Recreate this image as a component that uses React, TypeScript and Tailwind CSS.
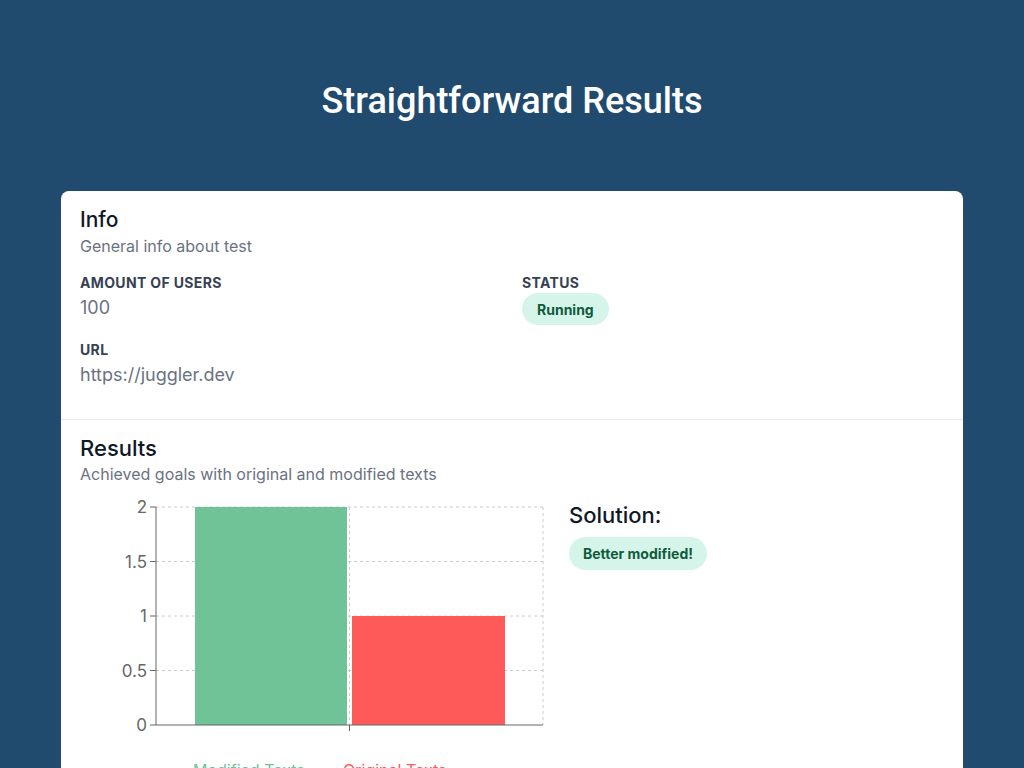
import React from "react";

function Chart() {
  const left = 76;
  const right = 463;
  const top = 11;
  const bottom = 229;
  const h = bottom - top;
  const yFor = (v: number) => bottom - (v / 2) * h;
  const ticks = [0, 0.5, 1, 1.5, 2];
  const mid = (left + right) / 2;
  return (
    <svg width="470" height="290" viewBox="0 0 470 290" className="shrink-0 block">
      {ticks.map((t) =>
        t === 0 ? null : (
          <line key={t} x1={left} x2={right} y1={yFor(t)} y2={yFor(t)} stroke="#ccc" strokeDasharray="3 3" />
        )
      )}
      <line x1={mid} x2={mid} y1={top} y2={bottom} stroke="#ccc" strokeDasharray="3 3" />
      <line x1={right} x2={right} y1={top} y2={bottom} stroke="#ccc" strokeDasharray="3 3" />
      <rect x={115} y={yFor(2)} width={152} height={bottom - yFor(2)} fill="#70c297" />
      <rect x={272} y={yFor(1)} width={153} height={bottom - yFor(1)} fill="#ff5a5a" />
      <line x1={left} x2={left} y1={top} y2={bottom} stroke="#666" />
      <line x1={left} x2={right} y1={bottom} y2={bottom} stroke="#666" />
      <line x1={mid} x2={mid} y1={bottom} y2={bottom + 6} stroke="#666" />
      {ticks.map((t) => (
        <g key={"t" + t}>
          <line x1={left - 6} x2={left} y1={yFor(t)} y2={yFor(t)} stroke="#666" />
          <text
            x={left - 9}
            y={yFor(t)}
            dy="0.355em"
            textAnchor="end"
            fill="#666"
            fontSize="17"
            fontFamily="Inter, 'Noto Sans', sans-serif"
          >
            {t}
          </text>
        </g>
      ))}
      <text x={113} y={280} fill="#70c297" fontSize="16" fontFamily="Inter, 'Noto Sans', sans-serif">
        Modified Texts
      </text>
      <text x={263} y={280} fill="#ff5a5a" fontSize="16" fontFamily="Inter, 'Noto Sans', sans-serif">
        Original Texts
      </text>
    </svg>
  );
}

export default function App() {
  return (
    <div className="min-h-[768px] bg-[#214a6f] font-['Inter','Noto_Sans',sans-serif]">
      <div className="pt-[79px] pb-[68px] text-center">
        <h1 className="font-['Roboto',sans-serif] text-[36px] leading-[44px] font-medium text-white">
          Straightforward Results
        </h1>
      </div>
      <div className="mx-auto w-[902px] rounded-lg bg-white">
        <section className="px-[19px] pt-[15px] pb-[32px] border-b border-gray-200">
          <h2 className="text-[21px] leading-7 font-medium text-gray-900">Info</h2>
          <p className="text-[16px] leading-6 text-gray-500">General info about test</p>
          <div className="mt-[17px] grid grid-cols-2 gap-x-5 gap-y-[17px]">
            <div>
              <div className="text-[14px] leading-4 font-bold tracking-wide text-gray-700">AMOUNT OF USERS</div>
              <div className="mt-[5px] text-[18px] leading-6 text-gray-500">100</div>
            </div>
            <div>
              <div className="text-[14px] leading-4 font-bold tracking-wide text-gray-700">STATUS</div>
              <div className="mt-[2px]">
                <span className="inline-flex h-8 items-center rounded-full bg-[#d6f5ea] px-[15px] text-[14px] font-bold text-[#0f5b3d]">
                  Running
                </span>
              </div>
            </div>
            <div>
              <div className="text-[14px] leading-4 font-bold tracking-wide text-gray-700">URL</div>
              <div className="mt-[5px] text-[18px] leading-6 text-gray-500">https://juggler.dev</div>
            </div>
          </div>
        </section>
        <section className="px-[19px] pt-[14px]">
          <h2 className="text-[22px] leading-7 font-medium text-gray-900">Results</h2>
          <p className="text-[16px] leading-6 text-gray-500">Achieved goals with original and modified texts</p>
          <div className="mt-[10px] flex gap-[19px]">
            <Chart />
            <div className="pt-[5px]">
              <div className="text-[22px] leading-7 font-medium text-gray-900">Solution:</div>
              <div className="mt-2">
                <span className="inline-flex h-[33px] items-center rounded-full bg-[#d6f5ea] px-[14px] text-[14px] font-bold text-[#0f5b3d]">
                  Better modified!
                </span>
              </div>
            </div>
          </div>
        </section>
      </div>
    </div>
  );
}
